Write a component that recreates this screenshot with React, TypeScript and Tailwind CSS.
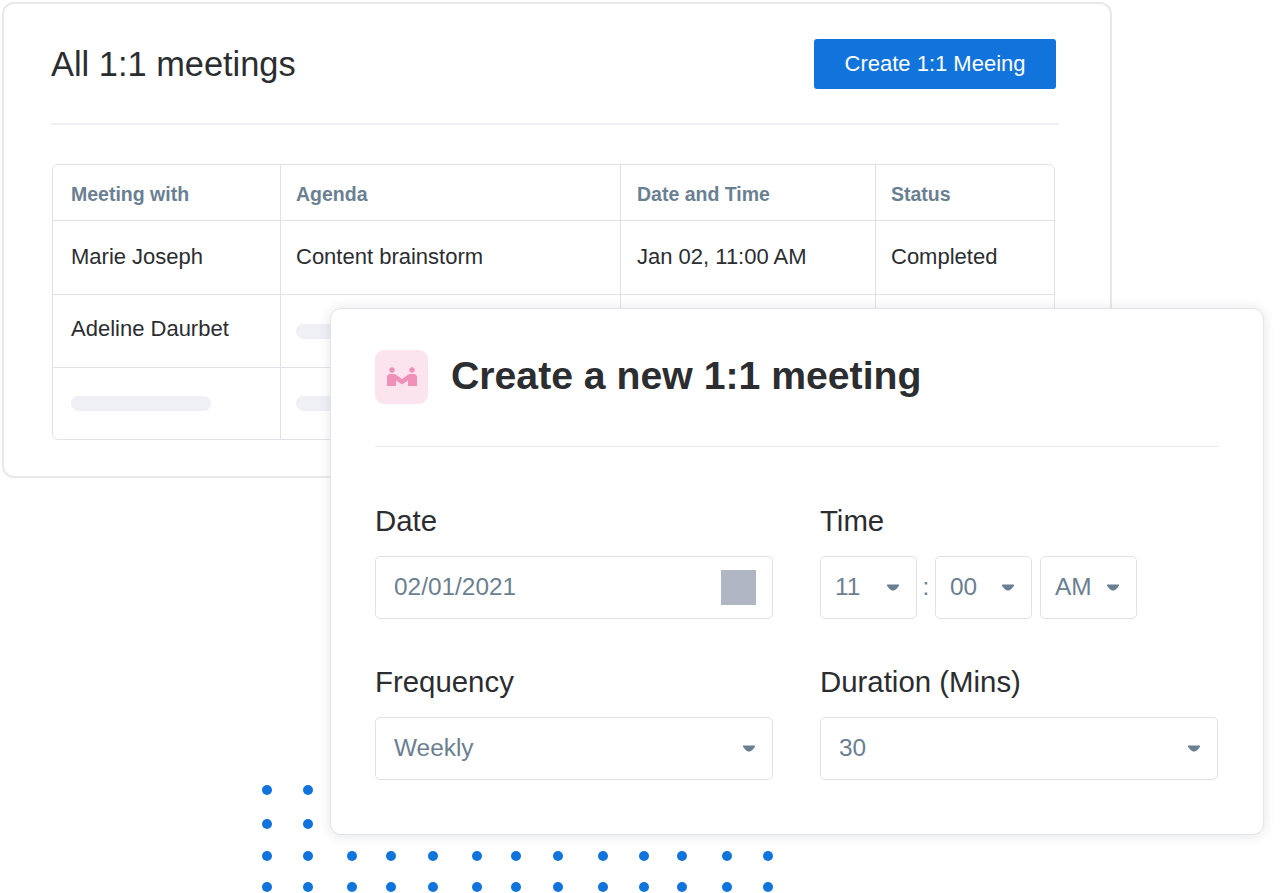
// All 1:1 meetings + create dialog

const dotCols = [267, 308, 352, 391, 433, 477, 516, 558, 603, 644, 682, 727, 768];
const dotRows = [790, 824, 856, 887];

function Caret({ className = '' }: { className?: string }) {
  return (
    <svg width="14" height="7" viewBox="0 0 14 7" className={className}>
      <path d="M1 1.2 C1 0.6 1.5 0.5 2 0.5 H12 C12.5 0.5 13 0.6 13 1.2 C12 3.6 9.5 6.5 7 6.5 C4.5 6.5 2 3.6 1 1.2 Z" fill="#6b7f92" />
    </svg>
  );
}

function Field({ value, wide, children }: { value: string; wide?: boolean; children?: React.ReactNode }) {
  return (
    <div className={`flex h-[63px] items-center justify-between rounded-[5px] border border-[#dfe3e9] bg-white ${wide ? 'w-[398px] pl-[18px] pr-[16px]' : 'w-[97px] pl-[14px] pr-[16px]'}`}>
      <span className="text-[24.4px] leading-none text-[#6b7f92]">{value}</span>
      {children ?? <Caret />}
    </div>
  );
}

function Cell({ children, last, head }: { children?: React.ReactNode; last?: boolean; head?: boolean }) {
  return (
    <div className={`flex items-center pr-2 ${last ? '' : 'border-r border-[#dfe3e9]'} ${head ? 'text-[19.5px] font-bold text-[#6b7f92]' : 'text-[22px] text-[#2b2d31]'}`}>
      {children}
    </div>
  );
}

function Skeleton() {
  return <div className="h-[15px] w-[140px] rounded-full bg-[#eef0f6]" />;
}

const gridCols = 'grid grid-cols-[228px_340px_255px_1fr]';

export default function App() {
  return (
    <div className="relative h-[893px] w-[1280px] overflow-hidden bg-white font-['Liberation_Sans',Arial,sans-serif]">
      <div className="ml-[2px] mt-[2px] h-[476px] w-[1110px] rounded-[12px] border-2 border-[#e6e8ec] bg-white pl-[47px] pr-[51px] pt-[35px]">
        <div className="flex h-[50px] items-center justify-between pr-[3px]">
          <h1 className="pt-px text-[34.4px] font-normal leading-none text-[#2b2d31]">All 1:1 meetings</h1>
          <button className="h-[50px] w-[242px] rounded-[3px] bg-[#1174dc] pb-px text-[22px] text-white">Create 1:1 Meeing</button>
        </div>
        <div className="mt-[34px] border-t-2 border-[#eef0f3]" />
        <div className="ml-px mr-[4px] mt-[39px] h-[276px] overflow-hidden rounded-[6px] border border-[#dfe3e9] text-[22px]">
          <div className={`${gridCols} h-[56px] border-b border-[#dfe3e9]`}>
            <Cell head><span className="pl-[18px] pt-[4px]">Meeting with</span></Cell>
            <Cell head><span className="pl-[15px] pt-[4px]">Agenda</span></Cell>
            <Cell head><span className="pl-[16px] pt-[4px]">Date and Time</span></Cell>
            <Cell head last><span className="pl-[15px] pt-[4px]">Status</span></Cell>
          </div>
          <div className={`${gridCols} h-[74px] border-b border-[#dfe3e9]`}>
            <Cell><span className="pb-[2px] pl-[18px]">Marie Joseph</span></Cell>
            <Cell><span className="pb-[2px] pl-[15px]">Content brainstorm</span></Cell>
            <Cell><span className="pb-[2px] pl-[16px]">Jan 02, 11:00 AM</span></Cell>
            <Cell last><span className="pb-[2px] pl-[15px]">Completed</span></Cell>
          </div>
          <div className={`${gridCols} h-[73px] border-b border-[#dfe3e9]`}>
            <Cell><span className="pb-[5px] pl-[18px]">Adeline Daurbet</span></Cell>
            <Cell><div className="pl-[15px]"><Skeleton /></div></Cell>
            <Cell />
            <Cell last />
          </div>
          <div className={`${gridCols} h-[71px]`}>
            <Cell><div className="pl-[18px]"><Skeleton /></div></Cell>
            <Cell><div className="pl-[15px]"><Skeleton /></div></Cell>
            <Cell />
            <Cell last />
          </div>
        </div>
      </div>

      <svg className="absolute left-0 top-0" width="1280" height="893">
        {dotRows.map((y) =>
          dotCols.map((x) =>
            y < 850 && x > 320 ? null : <circle key={`${x}-${y}`} cx={x} cy={y} r="5" fill="#1174dc" />,
          ),
        )}
      </svg>

      <div className="absolute left-[330px] top-[308px] h-[527px] w-[934px] rounded-[11px] border border-[#e2e4e8] bg-white px-[44px] pt-[41px] shadow-[0_1px_12px_rgba(40,50,70,0.13)]">
        <div className="flex items-center gap-[23px]">
          <div className="flex h-[54px] w-[53px] items-center justify-center rounded-[9px] bg-[#fce4ee]">
            <svg width="30" height="20" viewBox="0 0 30 20" fill="#f08fb8">
              <circle cx="5" cy="3" r="2.7" />
              <circle cx="25" cy="3" r="2.7" />
              <path d="M0 19 V10 C0 8 1.5 7 3 7 H6 C8 7 9 7.5 10 8.5 L15 12 L20 8.5 C21 7.5 22 7 24 7 H27 C28.5 7 30 8 30 10 V19 H21 V13.5 L15 17.5 L9 13.5 V19 Z" />
            </svg>
          </div>
          <h2 className="pb-[2px] text-[39.2px] font-bold leading-none text-[#2b2d31]">Create a new 1:1 meeting</h2>
        </div>
        <div className="mt-[42px] border-t border-[#e9ebee]" />

        <div className="mt-[55px] grid grid-cols-[445px_1fr]">
          <div>
            <div className="text-[29.4px] leading-[38px] text-[#2b2d31]">Date</div>
            <div className="mt-[16px]">
              <Field value="02/01/2021" wide>
                <div className="h-[35px] w-[35px] bg-[#b0b6c3]" />
              </Field>
            </div>
          </div>
          <div>
            <div className="text-[29.4px] leading-[38px] text-[#2b2d31]">Time</div>
            <div className="mt-[16px] flex items-center">
              <Field value="11" />
              <span className="w-[18px] text-center text-[24.4px] text-[#6b7f92]">:</span>
              <Field value="00" />
              <div className="ml-[8px]"><Field value="AM" /></div>
            </div>
          </div>
          <div className="mt-[44px]">
            <div className="text-[29.4px] leading-[38px] text-[#2b2d31]">Frequency</div>
            <div className="mt-[16px]">
              <Field value="Weekly" wide />
            </div>
          </div>
          <div className="mt-[44px]">
            <div className="text-[29.4px] leading-[38px] text-[#2b2d31]">Duration (Mins)</div>
            <div className="mt-[16px]">
              <Field value="30" wide />
            </div>
          </div>
        </div>
      </div>
    </div>
  );
}
